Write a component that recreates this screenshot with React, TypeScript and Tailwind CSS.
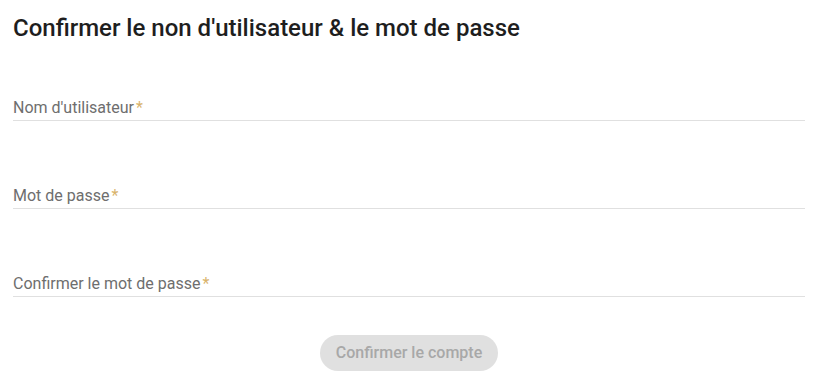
export default function App() {
  const fields = ["Nom d'utilisateur", "Mot de passe", "Confirmer le mot de passe"];
  return (
    <div className="min-h-[384px] w-[822px] bg-white font-['Roboto',sans-serif]">
      <div className="pl-[13px] pr-[17px] pt-[13px]">
        <h1 className="text-[24px] font-medium leading-[30px] text-[#1e1e1e]">
          Confirmer le non d'utilisateur &amp; le mot de passe
        </h1>
        <div className="mt-[55px] flex flex-col gap-[65px]">
          {fields.map((f) => (
            <div key={f} className="border-b border-[#e0e0e0] pb-[2px]">
              <label className="block text-[16px] leading-[20px] text-[#6e6e6e]">
                {f}
                <span className="ml-[2px] text-[#d9b36b]">*</span>
              </label>
            </div>
          ))}
        </div>
        <div className="mt-[38px] flex justify-center">
          <button className="h-[36px] w-[178px] rounded-full bg-[#e0e0e0] text-[16px] font-medium text-[#a8a8a8]">
            Confirmer le compte
          </button>
        </div>
      </div>
    </div>
  );
}
